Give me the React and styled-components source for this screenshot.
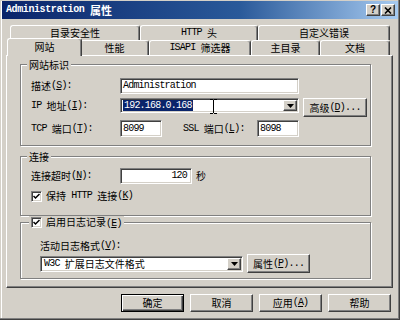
import React from "react";
import styled, { createGlobalStyle, css } from "styled-components";

const Global = createGlobalStyle`
  * { box-sizing: border-box; }
  html, body { margin: 0; padding: 0; background: #D4D0C8; }
  body {
    width: 400px; height: 320px; overflow: hidden;
    font-family: "Noto Sans CJK SC", "Noto Sans", sans-serif;
    font-size: 10px; line-height: 12px; color: #000;
  }
`;

const raisedCss = css`
  border: 1px solid;
  border-color: #fff #404040 #404040 #fff;
  box-shadow: inset -1px -1px #808080, inset 1px 1px #D4D0C8;
`;

const sunkenCss = css`
  border: 1px solid;
  border-color: #808080 #fff #fff #808080;
  box-shadow: inset 1px 1px #404040, inset -1px -1px #D4D0C8;
`;

const Window = styled.div`
  width: 400px; height: 320px;
  background: #D4D0C8;
  padding: 1px 2px 2px 2px;
  box-shadow: inset -1px -1px #404040, inset -2px -2px #808080, inset 1px 1px #D4D0C8, inset 2px 2px #fff;
  display: flex; flex-direction: column;
`;

const TitleBar = styled.div`
  height: 18px; flex: none;
  background: linear-gradient(to right, #0A246A 0%, #2A5A9A 60%, #A6CAF0 100%);
  display: flex; align-items: center; justify-content: space-between;
  padding: 0 3px 0 4px;
`;

const TitleText = styled.div`
  color: #fff; font-weight: bold; font-size: 11px;
  display: flex; align-items: center;
`;

const TitleMono = styled.span`
  font-family: "Liberation Mono", monospace;
  font-size: 10px; font-weight: bold; letter-spacing: -0.4px;
  white-space: pre;
`;

const TitleButtons = styled.div`
  display: flex; gap: 1px;
`;

const TitleButton = styled.div`
  width: 14px; height: 12px;
  background: #D4D0C8;
  ${raisedCss}
  display: flex; align-items: center; justify-content: center;
  font-family: "Liberation Sans", sans-serif; font-weight: bold; font-size: 10px; line-height: 10px;
`;

const Body = styled.div`
  flex: 1;
  padding: 6px 5px 0 4px;
  display: flex; flex-direction: column;
`;

const TabRow = styled.div`
  display: flex; height: 15px; flex: none;
  margin-left: ${p => p.$ml}px;
`;

const Tab = styled.div`
  flex: none;
  width: ${p => p.$w}px; height: 15px;
  background: #D4D0C8;
  border-top: 1px solid #fff; border-left: 1px solid #fff; border-right: 1px solid #404040;
  border-radius: 3px 3px 0 0;
  box-shadow: inset -1px 0 #808080;
  display: flex; align-items: center; justify-content: center;
  ${p => p.$active && css`
    width: ${p.$w + 4}px; height: 18px;
    margin: -2px -2px -1px -2px;
    padding-bottom: 2px;
    z-index: 1;
  `}
`;

const Panel = styled.div`
  height: 233px; flex: none;
  background: #D4D0C8;
  border: 1px solid; border-color: #fff #404040 #404040 #fff;
  box-shadow: inset -1px -1px #808080;
  padding: 8px 0 0 13px;
  display: flex; flex-direction: column;
`;

const Group = styled.div`
  width: 351px; height: ${p => p.$h}px; flex: none;
  margin-top: ${p => p.$mt || 0}px;
  border: 1px solid #808080;
  box-shadow: inset 1px 1px #fff, 1px 1px #fff;
  display: flex; flex-direction: column;
`;

const GroupTitle = styled.div`
  align-self: flex-start;
  height: 13px;
  margin: -7px 0 0 ${p => p.$ml}px;
  padding: 0 2px;
  background: #D4D0C8;
  display: flex; align-items: center; gap: 4px;
`;

const GroupBody = styled.div`
  padding-left: ${p => p.$pl}px;
  display: flex; flex-direction: column;
`;

const Row = styled.div`
  display: flex;
  align-items: ${p => p.$align || "center"};
  height: ${p => p.$h}px;
  margin-top: ${p => p.$mt || 0}px;
`;

const Label = styled.div`
  flex: none;
  width: ${p => (p.$w ? `${p.$w}px` : "auto")};
  height: ${p => (p.$h ? `${p.$h}px` : "auto")};
  margin-left: ${p => p.$ml || 0}px;
  display: flex; align-items: center; white-space: pre;
`;

const L = styled.span`
  font-family: "Liberation Mono", monospace;
  font-size: 10px; letter-spacing: -0.8px;
  white-space: pre;
`;

const U = styled.span`
  text-decoration: underline;
`;

const TextBox = styled.div`
  flex: none;
  width: ${p => p.$w}px; height: ${p => p.$h}px;
  background: #fff;
  ${sunkenCss}
  display: flex; align-items: center;
  justify-content: ${p => (p.$right ? "flex-end" : "flex-start")};
  padding: 0 ${p => (p.$right ? 4 : 2)}px 0 2px;
  white-space: pre;
`;

const Combo = styled.div`
  position: relative;
  flex: none;
  width: ${p => p.$w}px; height: ${p => p.$h}px;
  background: #fff;
  ${sunkenCss}
  padding: 1px;
  display: flex; align-items: center;
`;

const ComboText = styled.div`
  margin-left: 1px;
  padding: 0 1px;
  height: 11px;
  display: flex; align-items: center;
  background: ${p => (p.$selected ? "#0A246A" : "transparent")};
  color: ${p => (p.$selected ? "#fff" : "#000")};
  white-space: pre;
`;

const DropButton = styled.div`
  margin-left: auto;
  width: 14px; height: 100%;
  background: #D4D0C8;
  ${raisedCss}
  display: flex; align-items: center; justify-content: center;
`;

const Cursor = styled.svg`
  position: absolute;
  left: ${p => p.$x}px; top: 0;
`;

const PushButton = styled.div`
  flex: none;
  width: ${p => p.$w}px; height: ${p => p.$h}px;
  margin-left: ${p => p.$ml || 0}px;
  background: #D4D0C8;
  ${raisedCss}
  ${p => p.$default && css`
    border: 1px solid #000;
    box-shadow: inset 1px 1px #fff, inset -1px -1px #404040, inset -2px -2px #808080;
  `}
  display: flex; align-items: center; justify-content: center;
  white-space: pre;
`;

const CheckBox = styled.div`
  flex: none;
  width: 11px; height: 11px;
  background: #fff;
  ${sunkenCss}
  display: flex; align-items: center; justify-content: center;
`;

const ButtonRow = styled.div`
  display: flex; justify-content: flex-end; gap: 6px;
  margin-top: 6px;
  padding-right: 2px;
`;

const Check = () => (
  <CheckBox>
    <svg width="7" height="7" viewBox="0 0 7 7">
      <path d="M0.5 3 L2.5 5 L6.5 1" stroke="#000" strokeWidth="1.5" fill="none" />
    </svg>
  </CheckBox>
);

const Arrow = () => (
  <svg width="7" height="4" viewBox="0 0 7 4">
    <path d="M0 0 H7 L3.5 4 Z" fill="#000" />
  </svg>
);

export default function App() {
  return (
    <>
      <Global />
      <Window>
        <TitleBar>
          <TitleText>
            <TitleMono>Administration </TitleMono>
            <span>属性</span>
          </TitleText>
          <TitleButtons>
            <TitleButton>?</TitleButton>
            <TitleButton>
              <svg width="8" height="7" viewBox="0 0 8 7">
                <path d="M1 0.5 L7 6.5 M7 0.5 L1 6.5" stroke="#000" strokeWidth="1.6" />
              </svg>
            </TitleButton>
          </TitleButtons>
        </TitleBar>
        <Body>
          <TabRow $ml={4}>
            <Tab $w={130}>目录安全性</Tab>
            <Tab $w={118}><L>HTTP </L>头</Tab>
            <Tab $w={132}>自定义错误</Tab>
          </TabRow>
          <TabRow $ml={3}>
            <Tab $w={71} $active>网站</Tab>
            <Tab $w={69}>性能</Tab>
            <Tab $w={102}><L>ISAPI </L>筛选器</Tab>
            <Tab $w={69}>主目录</Tab>
            <Tab $w={70}>文档</Tab>
          </TabRow>
          <Panel>
            <Group $h={82}>
              <GroupTitle $ml={6}>网站标识</GroupTitle>
              <GroupBody $pl={10}>
                <Row $h={16} $mt={7}>
                  <Label $w={89}>描述<L>(<U>S</U>):</L></Label>
                  <TextBox $w={179} $h={16}><L>Administration</L></TextBox>
                </Row>
                <Row $h={19} $mt={4} $align="flex-start">
                  <Label $w={89} $h={15}><L>IP </L>地址<L>(<U>I</U>):</L></Label>
                  <Combo $w={179} $h={15}>
                    <ComboText $selected><L>192.168.0.168</L></ComboText>
                    <DropButton><Arrow /></DropButton>
                    <Cursor $x={89} width="7" height="15" viewBox="0 0 7 15">
                      <path d="M0 0.5 H3 M4 0.5 H7 M3.5 1 V14 M0 14.5 H3 M4 14.5 H7" stroke="#000" strokeWidth="1" fill="none" />
                    </Cursor>
                  </Combo>
                  <PushButton $w={64} $h={19} $ml={4}>高级<L>(<U>D</U>)...</L></PushButton>
                </Row>
                <Row $h={17} $mt={3}>
                  <Label $w={89}><L>TCP </L>端口<L>(<U>T</U>):</L></Label>
                  <TextBox $w={42} $h={17}><L>8099</L></TextBox>
                  <Label $w={74} $ml={21}><L>SSL </L>端口<L>(<U>L</U>):</L></Label>
                  <TextBox $w={42} $h={17}><L>8098</L></TextBox>
                </Row>
              </GroupBody>
            </Group>

            <Group $h={60} $mt={10}>
              <GroupTitle $ml={6}>连接</GroupTitle>
              <GroupBody $pl={10}>
                <Row $h={16} $mt={5}>
                  <Label $w={89}>连接超时<L>(<U>N</U>):</L></Label>
                  <TextBox $w={72} $h={16} $right><L>120</L></TextBox>
                  <Label $ml={4}>秒</Label>
                </Row>
                <Row $h={12} $mt={6}>
                  <Check />
                  <Label $ml={4}>保持<L> HTTP </L>连接<L>(<U>K</U>)</L></Label>
                </Row>
              </GroupBody>
            </Group>

            <Group $h={57} $mt={6}>
              <GroupTitle $ml={8}>
                <Check />
                <span>启用日志记录<L>(<U>E</U>)</L></span>
              </GroupTitle>
              <GroupBody $pl={19}>
                <Row $h={12} $mt={11}>
                  <Label>活动日志格式<L>(<U>V</U>):</L></Label>
                </Row>
                <Row $h={19} $mt={2}>
                  <Combo $w={203} $h={16}>
                    <ComboText><L>W3C </L>扩展日志文件格式</ComboText>
                    <DropButton><Arrow /></DropButton>
                  </Combo>
                  <PushButton $w={63} $h={19} $ml={4}>属性<L>(<U>P</U>)...</L></PushButton>
                </Row>
              </GroupBody>
            </Group>
          </Panel>
          <ButtonRow>
            <PushButton $w={63} $h={18} $default>确定</PushButton>
            <PushButton $w={63} $h={18}>取消</PushButton>
            <PushButton $w={63} $h={18}>应用<L>(<U>A</U>)</L></PushButton>
            <PushButton $w={63} $h={18}>帮助</PushButton>
          </ButtonRow>
        </Body>
      </Window>
    </>
  );
}
